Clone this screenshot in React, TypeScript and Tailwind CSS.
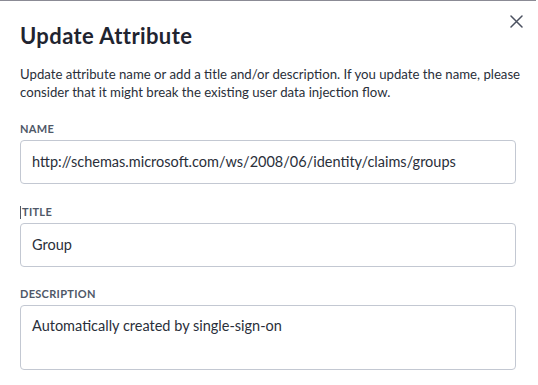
import React from "react";

export default function App() {
  const font = { fontFamily: "Lato, 'Noto Sans', sans-serif" };
  return (
    <div className="w-[538px] h-[385px] bg-white overflow-hidden relative" style={font}>
      <div className="h-px bg-[#8b8b95] w-[536px]" />
      <button className="absolute right-[15px] top-[15px] text-[#4b5160]">
        <svg width="13" height="13" viewBox="0 0 13 13" fill="none" stroke="currentColor" strokeWidth="1.5" strokeLinecap="round">
          <path d="M1 1 L12 12 M12 1 L1 12" />
        </svg>
      </button>
      <div className="px-[20px] pt-[21px]">
        <h1 className="text-[22px] leading-[28px] font-bold tracking-[0.4px] text-[#1f2430]">Update Attribute</h1>
        <p className="mt-[15px] w-[505px] text-[13.2px] leading-[18px] text-[#2a2f3a]">
          Update attribute name or add a title and/or description. If you update the name, please consider that it might break the existing user data injection flow.
        </p>
        <div className="mt-[21px] flex flex-col">
          <label className="text-[11px] leading-[14px] font-bold tracking-[0.3px] text-[#4f5868] uppercase">Name</label>
          <div className="mt-[4px] h-[44px] w-[496px] rounded-[4px] border border-[#c3c8d2] flex items-center px-[11px] text-[14.5px] text-[#2a2f3a]">
            http://schemas.microsoft.com/ws/2008/06/identity/claims/groups
          </div>
          <label className="mt-[21px] text-[11px] leading-[14px] font-bold tracking-[0.3px] text-[#4f5868] uppercase flex items-center">
            <span className="w-px h-[13px] bg-[#4f5868] mr-px" />Title
          </label>
          <div className="mt-[4px] h-[44px] w-[496px] rounded-[4px] border border-[#c3c8d2] flex items-center px-[11px] text-[14.5px] text-[#2a2f3a]">
            Group
          </div>
          <label className="mt-[20px] text-[11px] leading-[14px] font-bold tracking-[0.3px] text-[#4f5868] uppercase">Description</label>
          <div className="mt-[4px] h-[65px] w-[496px] rounded-[4px] border border-[#c3c8d2] px-[11px] pt-[10px] text-[14.5px] leading-[19px] text-[#2a2f3a]">
            Automatically created by single-sign-on
          </div>
        </div>
      </div>
    </div>
  );
}
